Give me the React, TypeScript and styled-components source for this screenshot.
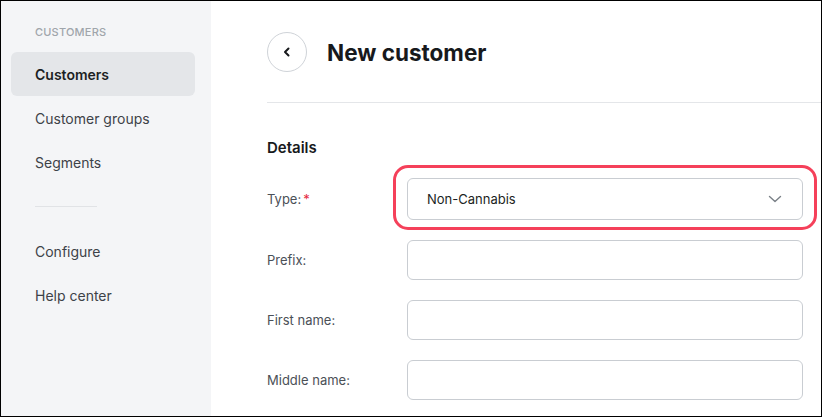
import { Fragment } from 'react';
import styled, { createGlobalStyle } from 'styled-components';

const Global = createGlobalStyle`
  body {
    margin: 0;
    font-family: Inter, "Noto Sans", "Liberation Sans", sans-serif;
    background: #fff;
  }
`;

const Frame = styled.div`
  width: 822px;
  height: 417px;
  box-sizing: border-box;
  border: 1px solid #000;
  display: flex;
  overflow: hidden;
  background: #fff;
`;

const Sidebar = styled.nav`
  width: 210px;
  flex-shrink: 0;
  background: #f4f5f7;
  box-sizing: border-box;
  padding: 23px 16px 0 10px;
  display: flex;
  flex-direction: column;
`;

const SectionLabel = styled.div`
  font-size: 11px;
  line-height: 16px;
  font-weight: 500;
  color: #a0a5ab;
  letter-spacing: 0.2px;
  padding-left: 24px;
  margin-bottom: 12px;
`;

const NavItem = styled.div<{ $active?: boolean }>`
  height: 44px;
  display: flex;
  align-items: center;
  padding-left: 24px;
  border-radius: 6px;
  font-size: 14px;
  font-weight: ${(p) => (p.$active ? 600 : 400)};
  color: ${(p) => (p.$active ? '#1c1f23' : '#3d4248')};
  background: ${(p) => (p.$active ? '#e4e6e9' : 'transparent')};
`;

const NavDivider = styled.div`
  width: 62px;
  height: 1px;
  background: #e1e3e6;
  margin: 22px 0 22px 24px;
`;

const Main = styled.main`
  flex: 1;
  display: flex;
  flex-direction: column;
  padding: 31px 0 0 56px;
  min-width: 0;
`;

const Header = styled.div`
  display: flex;
  align-items: center;
  gap: 20px;
`;

const BackButton = styled.button`
  width: 40px;
  height: 40px;
  border-radius: 50%;
  border: 1px solid #cfd3d8;
  background: #fff;
  display: flex;
  align-items: center;
  justify-content: center;
  padding: 0;
`;

const Title = styled.h1`
  margin: 0;
  font-size: 22.5px;
  font-weight: 700;
  color: #17191c;
`;

const Rule = styled.div`
  height: 1px;
  background: #e4e6e9;
  margin-top: 30px;
`;

const SectionTitle = styled.h2`
  margin: 35px 0 20px;
  font-size: 15px;
  line-height: 20px;
  font-weight: 600;
  color: #17191c;
`;

const Form = styled.div`
  display: grid;
  grid-template-columns: 140px 396px;
  row-gap: 20px;
  align-items: center;
`;

const Label = styled.label`
  font-size: 13px;
  color: #4b5057;
`;

const Required = styled.span`
  color: #e5293f;
  margin-left: 2px;
`;

const Field = styled.div`
  position: relative;
`;

const Highlight = styled.div`
  position: absolute;
  top: -13px;
  left: -14px;
  right: -14px;
  bottom: -10px;
  border: 3px solid #f5405a;
  border-radius: 15px;
  pointer-events: none;
`;

const Select = styled.div`
  height: 42px;
  box-sizing: border-box;
  border: 1px solid #c9cdd2;
  border-radius: 6px;
  display: flex;
  align-items: center;
  justify-content: space-between;
  padding: 0 20px 0 19px;
  font-size: 13px;
  color: #1c1f23;
`;

const Input = styled.input`
  height: 40px;
  width: 100%;
  box-sizing: border-box;
  border: 1px solid #c9cdd2;
  border-radius: 6px;
  background: #fff;
  outline: none;
`;

const fields = ['Prefix:', 'First name:', 'Middle name:'];

export default function App() {
  return (
    <Frame>
      <Global />
      <Sidebar>
        <SectionLabel>CUSTOMERS</SectionLabel>
        <NavItem $active>Customers</NavItem>
        <NavItem>Customer groups</NavItem>
        <NavItem>Segments</NavItem>
        <NavDivider />
        <NavItem>Configure</NavItem>
        <NavItem>Help center</NavItem>
      </Sidebar>
      <Main>
        <Header>
          <BackButton>
            <svg width="12" height="12" viewBox="0 0 12 12" fill="none">
              <path d="M7.5 2.5L4 6l3.5 3.5" stroke="#17191c" strokeWidth="2" strokeLinecap="round" strokeLinejoin="round" />
            </svg>
          </BackButton>
          <Title>New customer</Title>
        </Header>
        <Rule />
        <SectionTitle>Details</SectionTitle>
        <Form>
          <Label>
            Type:<Required>*</Required>
          </Label>
          <Field>
            <Select>
              <span>Non-Cannabis</span>
              <svg width="14" height="14" viewBox="0 0 14 14" fill="none">
                <path d="M1.5 4.5L7 9.5l5.5-5" stroke="#7a8087" strokeWidth="1.4" strokeLinecap="round" strokeLinejoin="round" />
              </svg>
            </Select>
            <Highlight />
          </Field>
          {fields.map((f) => (
            <Fragment key={f}>
              <Label>{f}</Label>
              <Input />
            </Fragment>
          ))}
        </Form>
      </Main>
    </Frame>
  );
}
